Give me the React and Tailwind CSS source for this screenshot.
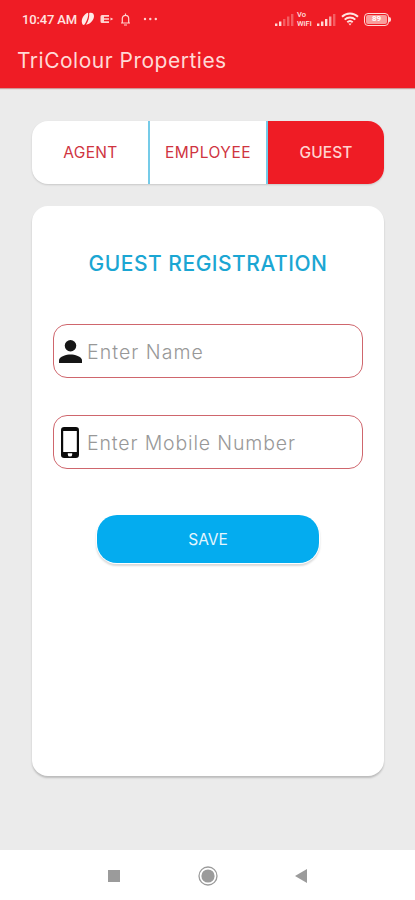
import { useState } from 'react';

const TABS = [
  { label: 'AGENT', spacing: 'tracking-[0.35px] pl-px' },
  { label: 'EMPLOYEE', spacing: 'tracking-[0.5px]' },
  { label: 'GUEST', spacing: 'tracking-[0.05px]' },
];

function SignalIcon({ strong }) {
  return (
    <svg width="19" height="13" viewBox="0 0 19 13" fill="#ffd9d6">
      <rect x="0" y="10.5" width="2.4" height="2.5" />
      <rect x="4" y="8.5" width="2.4" height="4.5" />
      <rect x="8" y="6" width="2.4" height="7" opacity={strong ? 1 : 0.35} />
      <rect x="12" y="3.5" width="2.4" height="9.5" opacity={strong ? 0.7 : 0.35} />
      <rect x="16" y="1" width="2.4" height="12" opacity="0.35" />
    </svg>
  );
}

function StatusBar() {
  return (
    <div className="flex h-[38px] items-center pl-[22px] pr-[24px] text-[#ffe3e0]">
      <span className="w-[56px] whitespace-nowrap font-[Roboto] text-[13px] font-medium leading-none tracking-[-0.15px]">
        10:47 AM
      </span>
      <svg className="ml-[3px]" width="14" height="14" viewBox="0 0 14 14">
        <path d="M1 11C0 7 3 2 7 .8 8 3 6 10 3 13 1.8 13 1.2 12 1 11Z" fill="#ffe9e7" />
        <path d="M5 12.8C7.5 9 8.5 5 8.2 1 11 .2 13 1.5 13 4 13 8 9.5 12 5 12.8Z" fill="#ffe9e7" />
      </svg>
      <svg className="ml-[5px]" width="14" height="10" viewBox="0 0 14 10" fill="#ffd3d0">
        <path d="M2 1h7v1.8H4v1.4h5v1.6H4v1.4h5V9H2Q.5 9 .5 7.5v-5Q.5 1 2 1Z" />
        <path d="M10.5 3.4 13.3 5l-2.8 1.6Z" />
      </svg>
      <svg
        className="ml-[6px]"
        width="11"
        height="13"
        viewBox="0 0 11 13"
        fill="none"
        stroke="#ffd3d0"
        strokeWidth="1.2"
      >
        <path d="M1 10h9M2.3 10V5.5a3.2 3.2 0 0 1 6.4 0V10M5.5 2.3V.6M4 12h3" />
      </svg>
      <svg className="ml-[12px]" width="15" height="4" viewBox="0 0 15 4" fill="#ffd3d0">
        <circle cx="2" cy="2" r="1.2" />
        <circle cx="7.3" cy="2" r="1.2" />
        <circle cx="12.8" cy="2" r="1.2" />
      </svg>

      <div className="ml-auto flex items-center">
        <SignalIcon />
        <div className="ml-[3px] flex w-[16px] flex-col whitespace-nowrap font-[Roboto] text-[7.5px] font-medium leading-[9px]">
          <span>Vo</span>
          <span>WiFi</span>
        </div>
        <span className="ml-[4px]">
          <SignalIcon strong />
        </span>
        <svg
          className="ml-[5px]"
          width="18"
          height="14"
          viewBox="0 0 18 14"
          fill="none"
          stroke="#ffe3e0"
          strokeWidth="2"
        >
          <path d="M1 4.7a11.5 11.5 0 0 1 16 0M3.7 7.6a7.6 7.6 0 0 1 10.6 0M6.3 10.2a4 4 0 0 1 5.4 0" />
          <path d="M7.4 11.5h3.2L9 13.4Z" fill="#ffe3e0" stroke="none" />
        </svg>
        <div className="ml-[5px] flex h-[13px] w-[25px] items-center justify-center rounded-[4px] border-[1.5px] border-[#ffd9d6] p-px">
          <span className="flex h-full w-full items-center justify-center rounded-[2px] bg-[#f99d9c] font-[Roboto] text-[8px] font-bold leading-none text-white">
            89
          </span>
        </div>
        <span className="h-[5px] w-[2px] rounded-r bg-[#ffd9d6]" />
      </div>
    </div>
  );
}

function PersonIcon() {
  return (
    <svg width="23" height="23" viewBox="0 0 16 16" fill="#161616">
      <circle cx="8" cy="4" r="4" />
      <path d="M8 10c-2.67 0-8 1.34-8 4v2h16v-2c0-2.66-5.33-4-8-4Z" />
    </svg>
  );
}

function PhoneIcon() {
  return (
    <svg className="mr-[2px]" width="18" height="31" viewBox="0 0 18 31">
      <rect width="18" height="31" rx="3.2" fill="#0b0b0b" />
      <rect x="2.2" y="4" width="13.6" height="21" fill="#fff" />
      <path d="M6.8 26.2h4.4v1.2a2.2 2.2 0 0 1-4.4 0Z" fill="#fff" />
    </svg>
  );
}

function Field({ icon, placeholder, spacing }) {
  return (
    <label className="flex h-[54px] items-center rounded-[14px] border-[1.5px] border-[#cf666d] pl-[5px]">
      <span className="flex w-[23px] shrink-0 justify-center">{icon}</span>
      <input
        placeholder={placeholder}
        className={`ml-[5px] min-w-0 flex-1 bg-transparent pt-[3px] text-[19.5px] font-light outline-none placeholder:text-[#989898] ${spacing}`}
      />
    </label>
  );
}

export default function App() {
  const [active, setActive] = useState('GUEST');

  return (
    <div className="flex h-[900px] w-[415px] flex-col overflow-hidden bg-[#ebebeb] font-['Inter',sans-serif]">
      <header className="h-[88px] shrink-0 bg-[#ef1c25] shadow-[0_1px_1px_rgba(150,0,0,0.35)]">
        <StatusBar />
        <h1 className="whitespace-nowrap pl-[17px] pt-[8px] text-[21px] font-normal leading-[30px] tracking-[0.5px] text-[#ffd9d6]">
          TriColour Properties
        </h1>
      </header>

      <main className="flex flex-1 flex-col pl-[32px] pr-[31px] pt-[33px]">
        <div className="grid h-[63px] grid-cols-[116px_118px_118px] overflow-hidden rounded-[16px] bg-white shadow-[0_1px_2px_rgba(0,0,0,0.15)]">
          {TABS.map((tab, i) => (
            <button
              key={tab.label}
              onClick={() => setActive(tab.label)}
              className={`pt-px text-[15.5px] ${tab.spacing} ${
                i > 0 ? 'border-l-2 border-[#75cbe8]' : ''
              } ${active === tab.label ? 'bg-[#ef1c25] font-medium text-[#ffd3d0]' : 'font-normal text-[#cf343f]'}`}
            >
              {tab.label}
            </button>
          ))}
        </div>

        <section className="mt-[22px] h-[570px] rounded-[16px] bg-white px-[21px] shadow-[0_2px_2px_rgba(0,0,0,0.2)]">
          <h2 className="whitespace-nowrap pt-[43px] text-center text-[21px] font-medium leading-[30px] tracking-[0.5px] text-[#1ba6d3]">
            GUEST REGISTRATION
          </h2>
          <div className="mt-[45px] flex flex-col gap-[37px]">
            <Field icon={<PersonIcon />} placeholder="Enter Name" spacing="tracking-[1.05px]" />
            <Field icon={<PhoneIcon />} placeholder="Enter Mobile Number" spacing="tracking-[0.85px]" />
          </div>
          <button className="mx-auto mt-[46px] block h-[48px] w-[222px] rounded-[20px] bg-[#04acef] pt-px text-[15.5px] font-normal text-[#e4f6fe] shadow-[0_0_0_1px_#fff,0_2px_2px_1px_rgba(0,0,0,0.15)]">
            SAVE
          </button>
        </section>
      </main>

      <nav className="flex h-[50px] shrink-0 items-center justify-between bg-white pl-[108px] pr-[108px] pt-px">
        <span className="h-[12px] w-[12px] bg-[#9b9b9b]" />
        <svg width="20" height="20" viewBox="0 0 20 20">
          <circle cx="10" cy="10" r="9" fill="none" stroke="#9b9b9b" strokeWidth="1.3" />
          <circle cx="10" cy="10" r="6.6" fill="#9b9b9b" />
        </svg>
        <svg width="12" height="14" viewBox="0 0 12 14">
          <path d="M12 0v14L0 7Z" fill="#9b9b9b" />
        </svg>
      </nav>
    </div>
  );
}
